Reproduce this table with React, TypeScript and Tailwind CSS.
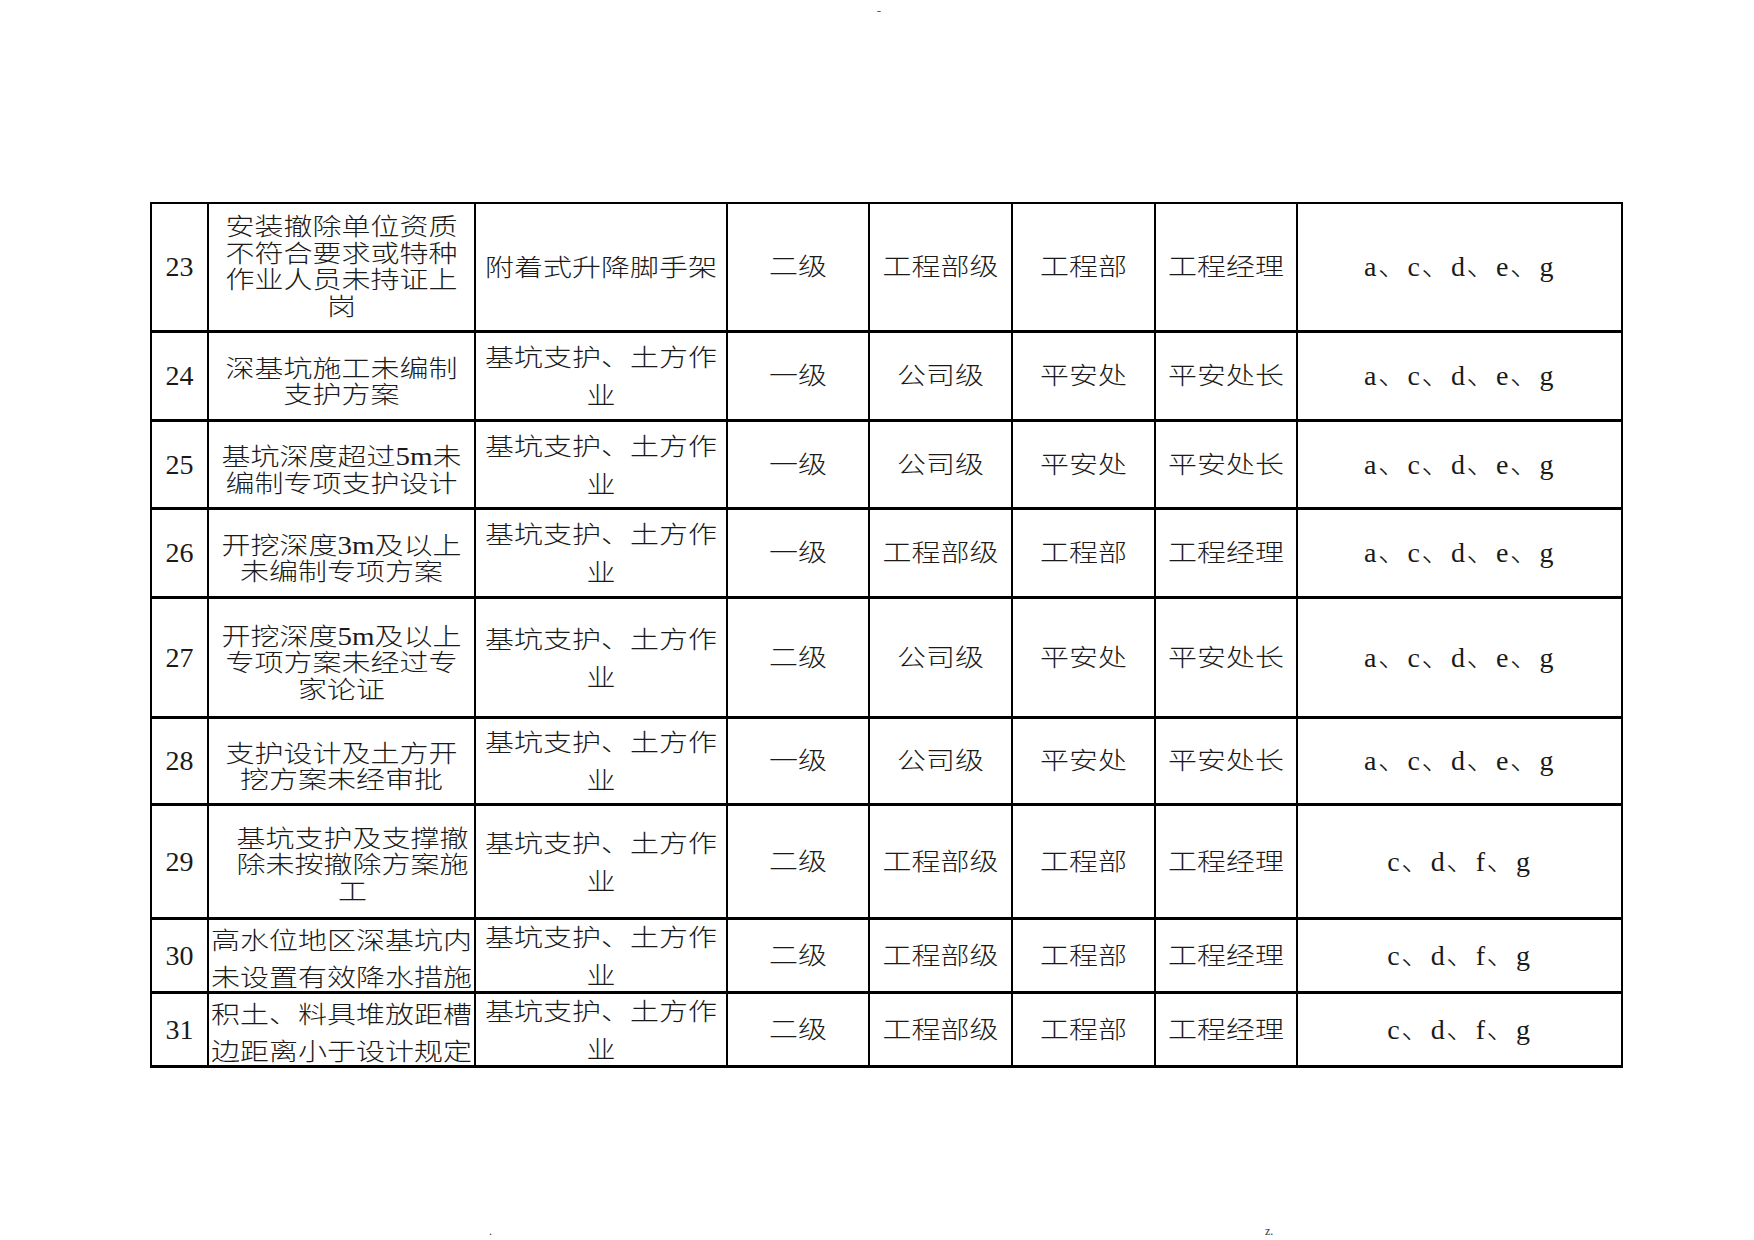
import React from "react";

// One row of the hazard table: number, description lines, work type lines,
// grade, management level, department, responsible person, measures.
type Row = {
	no: string;
	desc: string[];
	descWide?: boolean;
	descShift?: boolean;
	work: string[];
	grade: string;
	level: string;
	dept: string;
	owner: string;
	measures: string;
};

const WORK = ["基坑支护、土方作", "业"];

const rows: Row[] = [
	{
		no: "23",
		desc: ["安装撤除单位资质", "不符合要求或特种", "作业人员未持证上", "岗"],
		work: ["附着式升降脚手架"],
		grade: "二级",
		level: "工程部级",
		dept: "工程部",
		owner: "工程经理",
		measures: "a、c、d、e、g",
	},
	{
		no: "24",
		desc: ["深基坑施工未编制", "支护方案"],
		work: WORK,
		grade: "一级",
		level: "公司级",
		dept: "平安处",
		owner: "平安处长",
		measures: "a、c、d、e、g",
	},
	{
		no: "25",
		desc: ["基坑深度超过5m未", "编制专项支护设计"],
		work: WORK,
		grade: "一级",
		level: "公司级",
		dept: "平安处",
		owner: "平安处长",
		measures: "a、c、d、e、g",
	},
	{
		no: "26",
		desc: ["开挖深度3m及以上", "未编制专项方案"],
		work: WORK,
		grade: "一级",
		level: "工程部级",
		dept: "工程部",
		owner: "工程经理",
		measures: "a、c、d、e、g",
	},
	{
		no: "27",
		desc: ["开挖深度5m及以上", "专项方案未经过专", "家论证"],
		work: WORK,
		grade: "二级",
		level: "公司级",
		dept: "平安处",
		owner: "平安处长",
		measures: "a、c、d、e、g",
	},
	{
		no: "28",
		desc: ["支护设计及土方开", "挖方案未经审批"],
		work: WORK,
		grade: "一级",
		level: "公司级",
		dept: "平安处",
		owner: "平安处长",
		measures: "a、c、d、e、g",
	},
	{
		no: "29",
		desc: ["基坑支护及支撑撤", "除未按撤除方案施", "工"],
		descShift: true,
		work: WORK,
		grade: "二级",
		level: "工程部级",
		dept: "工程部",
		owner: "工程经理",
		measures: "c、d、f、g",
	},
	{
		no: "30",
		desc: ["高水位地区深基坑内", "未设置有效降水措施"],
		descWide: true,
		work: WORK,
		grade: "二级",
		level: "工程部级",
		dept: "工程部",
		owner: "工程经理",
		measures: "c、d、f、g",
	},
	{
		no: "31",
		desc: ["积土、料具堆放距槽", "边距离小于设计规定"],
		descWide: true,
		work: WORK,
		grade: "二级",
		level: "工程部级",
		dept: "工程部",
		owner: "工程经理",
		measures: "c、d、f、g",
	},
];

function Cell({
	children,
	className = "",
}: {
	children: React.ReactNode;
	className?: string;
}) {
	return (
		<div
			className={`flex flex-col items-center justify-center overflow-hidden whitespace-nowrap bg-white ${className}`}
		>
			{children}
		</div>
	);
}

// Lines renders explicit cell lines; the source glyphs are flatter than
// Noto's, so each line is squashed vertically in place.
function Lines({ lines, className = "" }: { lines: string[]; className?: string }) {
	return (
		<>
			{lines.map((l, i) => (
				<span key={i} className={`block scale-y-[0.84] ${className}`}>
					{l}
				</span>
			))}
		</>
	);
}

// descPad nudges the description block down like the source does.
function descPad(r: Row): string {
	if (r.descWide) return "pt-[9px]";
	if (r.desc.length >= 4) return "";
	if (r.descShift) return "pt-[8px] pl-[22px]";
	return "pt-[12px]";
}

export default function App() {
	return (
		<div
			className="flex h-[1240px] w-[1754px] flex-col bg-white font-light text-[#1a1a1a]"
			style={{ fontFamily: '"Liberation Serif", "Noto Sans CJK SC", serif' }}
		>
			<div className="flex h-[22px] justify-center pl-[4px] text-[13px] leading-[22px] text-[#555]">
				-
			</div>

			<div className="pl-[150px] pt-[180px]">
				<div className="grid w-max grid-cols-[55px_265px_250px_140px_141px_141px_140px_323px] grid-rows-[126px_86px_85px_86px_117px_84px_111px_71px_71px] gap-x-[2px] gap-y-[3px] bg-black px-[2px] pb-[3px] pt-[2px] text-[29px]">
					{rows.map((r) => (
						<React.Fragment key={r.no}>
							<Cell className="text-[28px] leading-none">{r.no}</Cell>
							<Cell className={descPad(r)}>
								<Lines
									lines={r.desc}
									className={r.descWide ? "leading-[37px]" : "leading-[26.5px]"}
								/>
							</Cell>
							<Cell className="pt-[2px]">
								<Lines lines={r.work} className="leading-[38px]" />
							</Cell>
							<Cell>
								<Lines lines={[r.grade]} />
							</Cell>
							<Cell>
								<Lines lines={[r.level]} />
							</Cell>
							<Cell>
								<Lines lines={[r.dept]} />
							</Cell>
							<Cell>
								<Lines lines={[r.owner]} />
							</Cell>
							<Cell className="text-[28px] tracking-[1.5px]">{r.measures}</Cell>
						</React.Fragment>
					))}
				</div>
			</div>

			<div className="mt-auto flex h-[18px] items-center text-[12px] leading-none text-[#333]">
				<span className="ml-[489px]">.</span>
				<span className="ml-[773px]">z.</span>
			</div>
		</div>
	);
}
